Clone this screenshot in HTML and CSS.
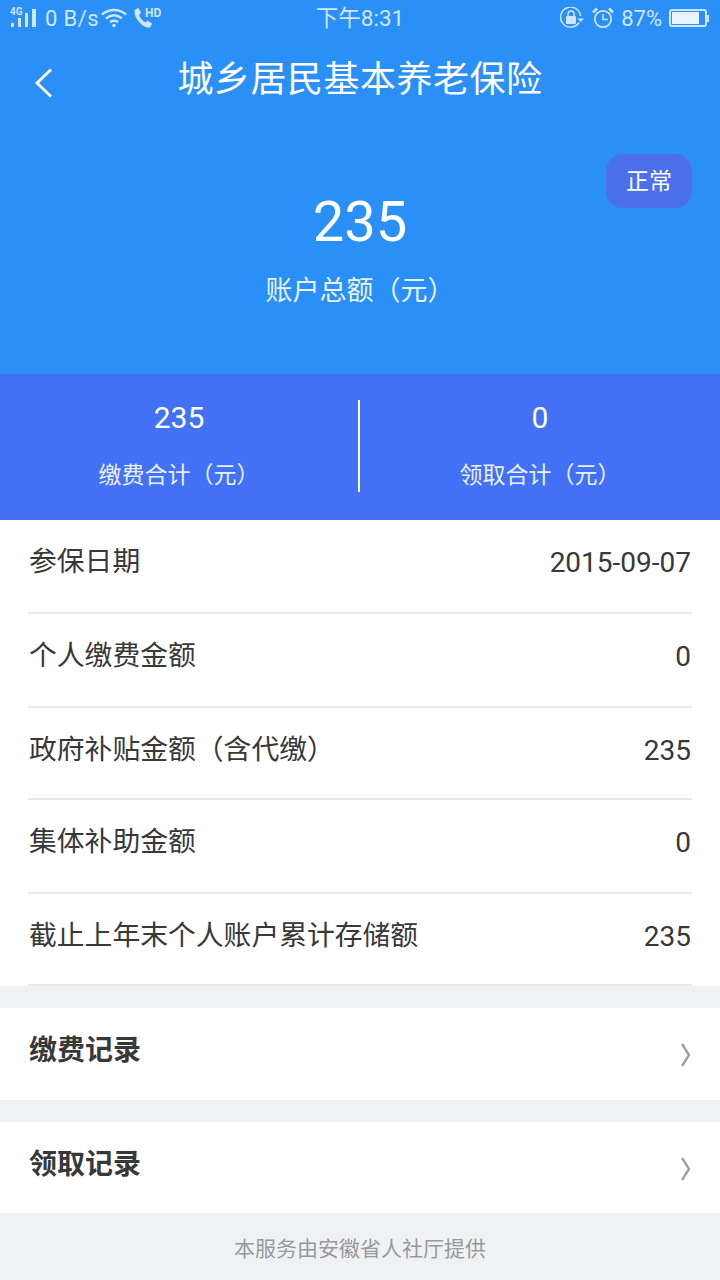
FILE: index.html

```html
<!DOCTYPE html>
<html lang="zh-CN">
<head>
<meta charset="utf-8">
<title>城乡居民基本养老保险</title>
<link rel="stylesheet" href="styles.css">
</head>
<body>

<div class="top-view">
	<div class="status-bar">
		<div class="status-left">
			<svg class="ico-signal" width="27" height="22" viewBox="0 0 27 22">
				<text x="0" y="8" class="net-text">4G</text>
				<rect x="1" y="16" width="3" height="4" fill="#cfe6fd"/>
				<rect x="8" y="11" width="3" height="9" fill="#cfe6fd"/>
				<rect x="15" y="6" width="3" height="14" fill="#cfe6fd"/>
				<rect x="22" y="2" width="4" height="18" fill="#cfe6fd"/>
			</svg>
			<span class="speed">0 B/s</span>
			<svg class="ico-wifi" width="26" height="20" viewBox="0 0 26 20" fill="none" stroke="#cfe6fd" stroke-width="2.400">
				<path d="M1 6.500C8 0.500 18 0.500 25 6.500"/>
				<path d="M5 10.500C10 6.500 16 6.500 21 10.500"/>
				<path d="M9 14C11.500 12.500 14.500 12.500 17 14"/>
				<circle cx="13" cy="17.500" r="1.800" fill="#cfe6fd" stroke="none"/>
			</svg>
			<svg class="ico-call" width="30" height="22" viewBox="0 0 30 22">
				<path d="M2 2.500L5.500 1L8 6L6 8C7 11 9.500 14 12.500 15.500L14.500 13.500L19 16.500L17.500 20C15 21.500 11 20 7.500 16.500C3 12 0.500 6.500 2 2.500Z" fill="#cfe6fd"/>
				<text x="12" y="10" class="net-text hd">HD</text>
			</svg>
		</div>
		<div class="status-time">下午8:31</div>
		<div class="status-right">
			<svg class="ico-lock" width="25" height="22" viewBox="0 0 25 22" fill="none">
				<path d="M19 15.500A10 10 0 1 1 20.500 9" stroke="#cfe6fd" stroke-width="1.500"/>
				<path d="M17.500 11.500H24L20.700 15Z" fill="#cfe6fd"/>
				<rect x="6" y="9" width="10" height="8" rx="1" fill="#cfe6fd"/>
				<path d="M8 9V7A3 3 0 0 1 14 7V9" stroke="#cfe6fd" stroke-width="1.500"/>
			</svg>
			<svg class="ico-alarm" width="22" height="22" viewBox="0 0 22 22" fill="none" stroke="#cfe6fd">
				<circle cx="11" cy="12" r="8.200" stroke-width="1.800"/>
				<path d="M11 7V12.500H16" stroke-width="1.500"/>
				<path d="M1 5.500L5 1.500M21 5.500L17 1.500" stroke-width="2.500"/>
			</svg>
			<span class="batt-text">87%</span>
			<div class="battery">
				<div class="battery-body"><div class="battery-fill"></div></div>
				<div class="battery-tip"></div>
			</div>
		</div>
	</div>

	<div class="nav-bar">
		<svg class="back-ico" width="20" height="32" viewBox="0 0 20 32" fill="none" stroke="#fff" stroke-width="2.800">
			<path d="M17 2.500L3 16L17 29.500"/>
		</svg>
		<div class="nav-title">城乡居民基本养老保险</div>
	</div>

	<div class="total-box">
		<div class="state-tag">正常</div>
		<div class="total-num">235</div>
		<div class="total-label">账户总额（元）</div>
	</div>
</div>

<div class="sum-bar">
	<div class="sum-col">
		<div class="sum-num">235</div>
		<div class="sum-label">缴费合计（元）</div>
	</div>
	<div class="sum-col sum-col-2">
		<div class="sum-num">0</div>
		<div class="sum-label">领取合计（元）</div>
	</div>
</div>

<div class="info-list">
	<div class="info-row row-1"><span class="key">参保日期</span><span class="val">2015-09-07</span></div>
	<div class="info-row row-2"><span class="key">个人缴费金额</span><span class="val">0</span></div>
	<div class="info-row row-3"><span class="key">政府补贴金额（含代缴）</span><span class="val">235</span></div>
	<div class="info-row row-4"><span class="key">集体补助金额</span><span class="val">0</span></div>
	<div class="info-row row-5"><span class="key">截止上年末个人账户累计存储额</span><span class="val">235</span></div>
</div>

<div class="link-row link-1">
	<span>缴费记录</span>
	<svg class="arrow" width="10" height="24" viewBox="0 0 10 24" fill="none" stroke="#a0a0a0" stroke-width="2.400"><path d="M1 1L8 12L1 23"/></svg>
</div>
<div class="link-row link-2">
	<span>领取记录</span>
	<svg class="arrow" width="10" height="24" viewBox="0 0 10 24" fill="none" stroke="#a0a0a0" stroke-width="2.400"><path d="M1 1L8 12L1 23"/></svg>
</div>

<div class="foot">本服务由安徽省人社厅提供</div>

</body>
</html>
```

FILE: styles.css

```css
* { box-sizing: border-box; }
html, body {
	margin: 0;
	padding: 0;
}
body {
	width: 720px;
	height: 1280px;
	overflow: hidden;
	background: #eef2f5;
	color: #383838;
	font-family: Roboto, "Noto Sans CJK SC", sans-serif;
}

.top-view {
	height: 374px;
	background: #2a8ff7;
	color: #fff;
}
.status-bar {
	height: 36px;
	display: flex;
	justify-content: space-between;
	align-items: center;
	color: #cfe6fd;
	font-size: 22px;
	position: relative;
}
.status-left {
	display: flex;
	align-items: center;
	padding-left: 10px;
}
.speed {
	margin-left: 8px;
	letter-spacing: 0.4px;
}
.ico-wifi { margin-left: 2px; }
.ico-call { margin-left: 6px; }
.net-text {
	font-size: 10px;
	font-weight: 700;
	fill: #cfe6fd;
}
.hd { font-size: 12px; }
.status-time {
	position: absolute;
	left: 0;
	right: 0;
	top: 1px;
	text-align: center;
	font-size: 22.500px;
	line-height: 34px;
}
.status-right {
	display: flex;
	align-items: center;
	padding-right: 11px;
}
.ico-alarm { margin-left: 7px; }
.batt-text { margin-left: 7px; }
.battery {
	margin-left: 7px;
	display: flex;
	align-items: center;
}
.battery-body {
	width: 38px;
	height: 18px;
	border: 2px solid #cfe6fd;
	border-radius: 3px;
	padding: 1px;
}
.battery-fill {
	width: 27px;
	height: 100%;
	background: #e8f3fe;
}
.battery-tip {
	width: 2px;
	height: 7px;
	background: #cfe6fd;
}

.nav-bar {
	height: 84px;
	position: relative;
	display: flex;
	justify-content: center;
	padding-top: 19px;
}
.back-ico {
	position: absolute;
	left: 34px;
	top: 31px;
}
.nav-title {
	font-size: 36px;
	line-height: 50px;
	letter-spacing: 0.500px;
}

.total-box {
	position: relative;
	text-align: center;
	padding-top: 65px;
}
.state-tag {
	position: absolute;
	top: 34px;
	right: 28px;
	width: 86px;
	height: 54px;
	line-height: 56px;
	border-radius: 17px;
	background: #4c70ec;
	font-size: 23px;
}
.total-num {
	font-size: 56px;
	line-height: 74px;
}
.total-label {
	font-size: 27px;
	line-height: 40px;
	margin-top: 12px;
	color: #e8f3fe;
}

.sum-bar {
	height: 146px;
	background: #4271f5;
	color: #fff;
	display: flex;
	padding-top: 26px;
}
.sum-col {
	width: 358px;
	height: 92px;
	text-align: center;
}
.sum-col-2 {
	width: 362px;
	border-left: 2px solid #fff;
}
.sum-num {
	font-size: 30px;
	line-height: 36px;
}
.sum-label {
	font-size: 23px;
	line-height: 32px;
	margin-top: 24px;
	color: #e8f0fe;
}

.info-list {
	background: #fff;
	padding: 0 28px;
	height: 466px;
}
.info-row {
	display: flex;
	justify-content: space-between;
	align-items: center;
	border-bottom: 2px solid #e6e8ea;
	font-size: 27.800px;
	padding-bottom: 9px;
}
.row-1 { height: 94px; }
.row-2 { height: 94px; }
.row-3 { height: 92px; }
.row-4 { height: 94px; }
.row-5 { height: 92px; }
.key {
	margin-left: 1px;
	margin-bottom: 6px;
}
.val {
	font-size: 28px;
	margin-top: 2px;
	margin-right: 1px;
}
.row-3 .key, .row-5 .key { margin-bottom: 4px; }
.row-3 .val, .row-5 .val { margin-top: 4px; }

.link-row {
	height: 92px;
	background: #fff;
	margin-top: 22px;
	padding: 0 29px 12px 29px;
	display: flex;
	justify-content: space-between;
	align-items: center;
	font-size: 28px;
	font-weight: 700;
}
.link-row .arrow { margin-top: 14px; }
.link-1 { height: 92px; }
.link-2 { height: 91px; }

.foot {
	text-align: center;
	font-size: 21px;
	line-height: 32px;
	color: #999;
	padding-top: 20px;
}
```
